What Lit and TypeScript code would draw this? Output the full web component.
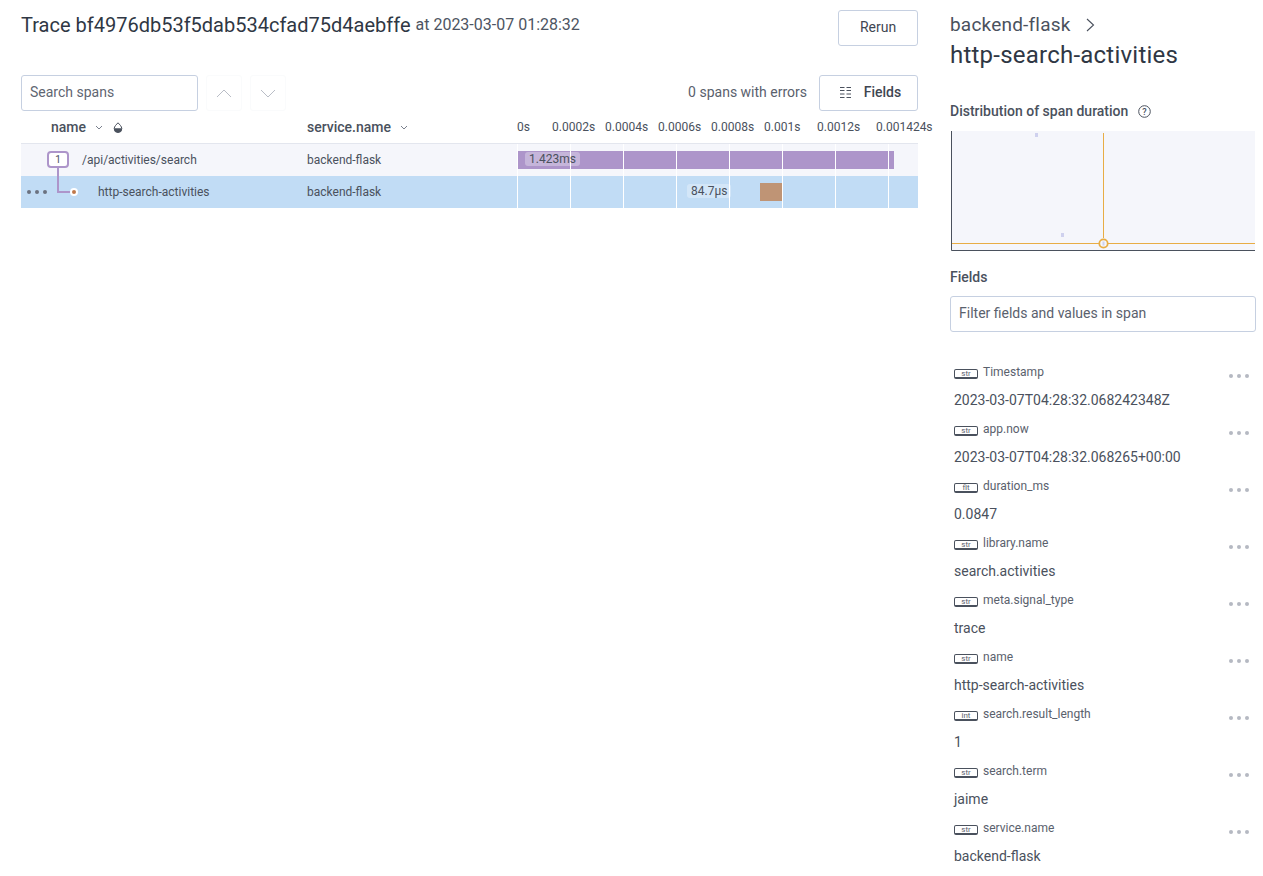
import { LitElement, html, css, svg } from 'lit';
import { customElement } from 'lit/decorators.js';

const TICKS = ['0s', '0.0002s', '0.0004s', '0.0006s', '0.0008s', '0.001s', '0.0012s', '0.001424s'];
const TICK_LEFT = [0, 35, 88, 141, 194, 247, 300, 359];

const ROWS = [
	{ name: '/api/activities/search', service: 'backend-flask', selected: false },
	{ name: 'http-search-activities', service: 'backend-flask', selected: true },
];

const FIELDS = [
	['str', 'Timestamp', '2023-03-07T04:28:32.068242348Z'],
	['str', 'app.now', '2023-03-07T04:28:32.068265+00:00'],
	['flt', 'duration_ms', '0.0847'],
	['str', 'library.name', 'search.activities'],
	['str', 'meta.signal_type', 'trace'],
	['str', 'name', 'http-search-activities'],
	['int', 'search.result_length', '1'],
	['str', 'search.term', 'jaime'],
	['str', 'service.name', 'backend-flask'],
];

const caret = html`<svg class="caret" width="8" height="5" viewBox="0 0 8 5"><path d="M1 1l3 3 3-3" fill="none" stroke="#6b7280" stroke-width="0.9"/></svg>`;

@customElement('app-root')
export class AppRoot extends LitElement {
	static styles = css`
		:host {
			display: flex;
			gap: 32px;
			height: 876px;
			overflow: hidden;
			padding-left: 21px;
			box-sizing: border-box;
			font-family: Roboto, "Open Sans", sans-serif;
			color: #3f4652;
			background: #fff;
		}
		.main {
			width: 897px;
			flex: none;
		}
		.head {
			display: flex;
			justify-content: space-between;
			height: 75px;
			padding-top: 10px;
			box-sizing: border-box;
		}
		.title {
			font-size: 20px;
			line-height: 30px;
			color: #2f3744;
		}
		.title small {
			font-size: 16px;
			color: #4d5562;
			position: relative;
			top: -2px;
		}
		button {
			font-family: inherit;
			font-size: 14px;
			font-weight: 500;
			color: #3f4652;
			height: 36px;
			background: #fff;
			border: 1px solid #c6d0e1;
			border-radius: 3px;
			display: flex;
			align-items: center;
			justify-content: center;
			padding: 0 0 2px;
		}
		.rerun { width: 80px; font-weight: 400; }
		.fields-btn { width: 99px; gap: 12px; padding-left: 3px; font-weight: 500; }
		.toolbar {
			display: flex;
			align-items: center;
			height: 36px;
		}
		.search {
			width: 177px;
			height: 36px;
			box-sizing: border-box;
			border: 1px solid #c6d0e1;
			border-radius: 3px;
			padding-left: 8px;
			font-size: 14px;
			line-height: 32px;
			color: #5f6672;
		}
		.nav {
			width: 36px;
			height: 36px;
			box-sizing: border-box;
			border: 1px solid #fafbfc;
			border-radius: 3px;
			display: flex;
			align-items: center;
			justify-content: center;
			margin-left: 8px;
		}
		.errors {
			margin-left: auto;
			margin-right: 12px;
			padding-bottom: 2px;
			font-size: 14px;
			color: #5a616d;
		}
		.grid {
			display: grid;
			grid-template-columns: 286px 210px 401px;
		}
		.th {
			height: 33px;
			display: flex;
			align-items: center;
			font-size: 14px;
			font-weight: 500;
			color: #4a515d;
			border-bottom: 1px solid #e3e6ee;
			box-sizing: border-box;
			gap: 9px;
		}
		.th.first { padding-left: 30px; }
		.ticks {
			position: relative;
			font-size: 12px;
			font-weight: 400;
			color: #4a515d;
		}
		.ticks span { position: absolute; top: 9px; white-space: nowrap; }
		.row { display: contents; }
		.cell {
			height: 32px;
			display: flex;
			align-items: center;
			font-size: 12px;
			color: #4a515d;
			background: #f5f6fb;
			position: relative;
		}
		.row.selected .cell { background: #c1dcf5; }
		.count {
			position: absolute;
			left: 26px;
			top: 7px;
			width: 22px;
			height: 17px;
			box-sizing: border-box;
			border: 2px solid #ad95ca;
			border-radius: 4px;
			background: #fff;
			font-size: 10px;
			text-align: center;
			line-height: 13px;
		}
		.link {
			position: absolute;
			left: 36px;
			top: -8px;
			width: 14px;
			height: 25px;
			box-sizing: border-box;
			border-left: 2px solid #ad95ca;
			border-bottom: 2px solid #ad95ca;
		}
		.node {
			position: absolute;
			left: 49px;
			top: 12px;
			width: 8px;
			height: 8px;
			border-radius: 50%;
			background: #c0784a;
			border: 2px solid #fff;
			box-sizing: border-box;
		}
		.dots {
			position: absolute;
			left: 6px;
			top: 14px;
			display: flex;
			gap: 4px;
		}
		.dots i {
			width: 4px;
			height: 4px;
			border-radius: 50%;
			background: #6b7280;
		}
		.timeline .line {
			position: absolute;
			top: 0;
			bottom: 0;
			width: 1px;
			background: #fff;
		}
		.bar {
			position: absolute;
			height: 18px;
		}
		.dur {
			position: absolute;
			padding: 0 4px;
			height: 14px;
			line-height: 14px;
			border-radius: 3px;
			background: rgba(255, 255, 255, 0.3);
		}
		.side {
			width: 306px;
			flex: none;
			padding-top: 13px;
		}
		.crumb {
			display: flex;
			align-items: center;
			gap: 15px;
			font-size: 19px;
			letter-spacing: 0.2px;
			line-height: 24px;
			color: #4a515d;
		}
		h1 {
			margin: 0;
			font-size: 24px;
			font-weight: 400;
			letter-spacing: 0.23px;
			line-height: 36px;
			color: #2f3744;
		}
		h2 {
			margin: 0;
			font-size: 14px;
			font-weight: 500;
			color: #4a515d;
			line-height: 20px;
		}
		.dist {
			display: flex;
			align-items: center;
			gap: 10px;
			margin-top: 28px;
		}
		.chart {
			display: block;
			margin-top: 10px;
			margin-left: 1px;
		}
		.fields-title { margin-top: 16px; }
		.filter {
			height: 36px;
			box-sizing: border-box;
			margin-top: 9px;
			border: 1px solid #c6d0e1;
			border-radius: 3px;
			padding-left: 8px;
			font-size: 14px;
			line-height: 32px;
			color: #5a616d;
		}
		.list { margin-top: 33px; }
		.field {
			height: 57px;
			position: relative;
		}
		.key {
			display: flex;
			align-items: center;
			gap: 5px;
			height: 14px;
			padding-left: 4px;
			font-size: 12px;
			color: #5a616d;
		}
		.type {
			width: 24px;
			height: 10px;
			box-sizing: border-box;
			border: 1px solid #4a515d;
			border-bottom-width: 2px;
			border-radius: 2px;
			font-size: 8px;
			line-height: 8px;
			text-align: center;
			margin-top: 3px;
		}
		.value {
			padding-left: 4px;
			margin-top: 12px;
			font-size: 14px;
			line-height: 18px;
			color: #4a515d;
		}
		.more {
			position: absolute;
			right: 7px;
			top: 9px;
			display: flex;
			gap: 4px;
		}
		.more i {
			width: 4px;
			height: 4px;
			border-radius: 50%;
			background: #b5b9c2;
		}
	`;

	renderTimeline(row: number) {
		const lines = [0, 53, 106, 159, 212, 265, 318, 371];
		return html`
			${row === 0
				? html`<div class="bar" style="left:1px;width:376px;top:7px;background:#ad95ca"></div>`
				: html`<div class="bar" style="left:243px;width:22px;top:7px;background:#bf9475"></div>`}
			${lines.map((x) => html`<div class="line" style="left:${x}px"></div>`)}
			${row === 0
				? html`<div class="dur" style="left:8px;top:8px">1.423ms</div>`
				: html`<div class="dur" style="left:170px;top:8px">84.7µs</div>`}
		`;
	}

	renderChart() {
		return svg`
			<svg class="chart" width="304" height="120" viewBox="0 0 304 120">
				<rect width="304" height="120" fill="#f5f6fb"/>
				<path d="M.5 0V119.500H304" fill="none" stroke="#4a515d"/>
				<rect x="84" y="2" width="3" height="4" fill="#cfd1ee"/>
				<rect x="110" y="102" width="3" height="4" fill="#cfd1ee"/>
				<path d="M152.500 2V107M1 112.500H304" stroke="#e8ad45" stroke-width="1" fill="none"/>
				<circle cx="152.500" cy="112.500" r="4.200" fill="#f5f6fb" stroke="#e8ad45" stroke-width="1.800"/>
				<rect x="151.500" y="110.500" width="2" height="4" fill="#cfd1ee"/>
			</svg>
		`;
	}

	render() {
		return html`
			<div class="main">
				<div class="head">
					<div class="title">Trace bf4976db53f5dab534cfad75d4aebffe <small>at 2023-03-07 01:28:32</small></div>
					<button class="rerun">Rerun</button>
				</div>
				<div class="toolbar">
					<div class="search">Search spans</div>
					<div class="nav"><svg width="16" height="9" viewBox="0 0 16 9"><path d="M1 8l7-7 7 7" fill="none" stroke="#b9bdc6"/></svg></div>
					<div class="nav"><svg width="16" height="9" viewBox="0 0 16 9"><path d="M1 1l7 7 7-7" fill="none" stroke="#b9bdc6"/></svg></div>
					<div class="errors">0 spans with errors</div>
					<button class="fields-btn">
						<svg width="13" height="13" viewBox="0 0 13 13"><path d="M1 1.500h4.500M7.500 1.500H12M1 4.500h4.500M7.500 4.500H12M1 8h4.500M7.500 8H12M1 11.500h4.500M7.500 11.500H12" stroke="#4a515d" fill="none"/></svg>
						Fields
					</button>
				</div>
				<div class="grid">
					<div class="th first">name ${caret}
						<svg width="10" height="11" viewBox="0 0 10 11" style="margin-left:1px"><path d="M5 .8C6.500 2.500 8.800 4.300 8.800 6.700a3.800 3.800 0 0 1-7.600 0C1.200 4.300 3.500 2.500 5 .8z" fill="#fff" stroke="#4a515d"/><path d="M1.200 6.200h7.600v.5a3.800 3.800 0 0 1-7.600 0z" fill="#4a515d"/></svg>
					</div>
					<div class="th">service.name ${caret}</div>
					<div class="th ticks">${TICKS.map((t, i) => html`<span style="left:${TICK_LEFT[i]}px">${t}</span>`)}</div>
					${ROWS.map((r, i) => html`
						<div class="row ${r.selected ? 'selected' : ''}">
							<div class="cell" style="padding-left:${i === 0 ? 61 : 77}px">
								${i === 0
									? html`<div class="count">1</div>`
									: html`
										<div class="link"></div>
										<div class="node"></div>
										<div class="dots"><i></i><i></i><i></i></div>`}
								${r.name}
							</div>
							<div class="cell">${r.service}</div>
							<div class="cell timeline">${this.renderTimeline(i)}</div>
						</div>
					`)}
				</div>
			</div>
			<div class="side">
				<div class="crumb">backend-flask
					<svg width="9" height="14" viewBox="0 0 9 14"><path d="M1 1l6.500 6L1 13" fill="none" stroke="#4a515d" stroke-width="1.100"/></svg>
				</div>
				<h1>http-search-activities</h1>
				<h2 class="dist">Distribution of span duration
					<svg width="13" height="13" viewBox="0 0 13 13"><circle cx="6.500" cy="6.500" r="5.800" fill="none" stroke="#4a515d"/><text x="6.500" y="9.500" font-size="9" text-anchor="middle" fill="#4a515d">?</text></svg>
				</h2>
				${this.renderChart()}
				<h2 class="fields-title">Fields</h2>
				<div class="filter">Filter fields and values in span</div>
				<div class="list">
					${FIELDS.map(([type, key, value]) => html`
						<div class="field">
							<div class="key"><span class="type">${type}</span>${key}</div>
							<div class="value">${value}</div>
							<div class="more"><i></i><i></i><i></i></div>
						</div>
					`)}
				</div>
			</div>
		`;
	}
}
